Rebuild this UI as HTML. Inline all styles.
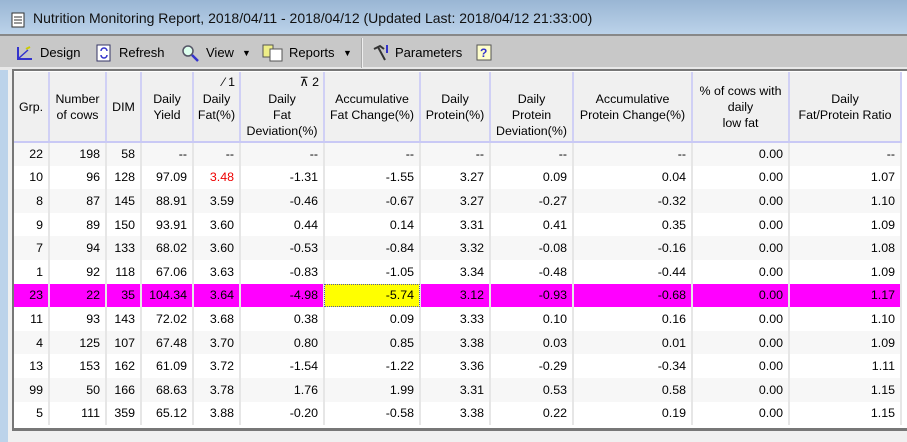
<!DOCTYPE html>
<html><head><style>
*{margin:0;padding:0;box-sizing:border-box}
body{width:907px;height:442px;overflow:hidden;position:relative;background:#f0f0f0;font-family:"Liberation Sans",sans-serif;font-size:12px;color:#000}
#title{position:absolute;left:0;top:0;width:907px;height:35px;background:linear-gradient(#99b6d4,#bcd3ea)}
#title span{position:absolute;left:33px;top:10px;font-size:14px;color:#111}
#tb{position:absolute;left:0;top:34px;width:907px;height:36px;background:#c8c8c8;border-top:2px solid #888;border-bottom:3px solid #e8e8e8}
#frame{position:absolute;left:0;top:35px;width:8px;height:407px;background:#bcd3ea}
.ti{position:absolute;top:9px;font-size:13px}
#grid{position:absolute;left:12px;top:69px;width:895px;height:360px;background:#fff;border-left:2px solid #777;border-top:2px solid #777}
table{border-collapse:collapse;table-layout:fixed;position:absolute;left:0;top:1px;font-size:12.4px}
th{background:#f0f0f0;font-weight:normal;height:70px;border-right:2px solid #d0d0f5;border-bottom:2px solid #c9c9f5;vertical-align:middle;line-height:16px;position:relative;padding:0 1px;white-space:nowrap}
td{height:23.6px;text-align:right;padding:0 5px;border-right:2px solid #e6e6e6;white-space:nowrap}
tr:nth-child(even) td{background:#f7f7f7}
tr.hl td{background:#ff00ff}
td.y{background:#ffff00!important;outline:1px dotted #55a;outline-offset:-1px}
.s{position:absolute;right:4px;top:2px}
#bot{position:absolute;left:12px;top:428px;width:895px;height:14px;background:#f0f0f0;border-top:3px solid #777}
</style></head><body>
<div id="title"><svg style="position:absolute;left:11px;top:12px" width="15" height="16"><rect x="1" y="1" width="12" height="14" fill="#fff" stroke="#333"/><path d="M3 5h8M3 8h8M3 11h8" stroke="#333"/></svg><span>Nutrition Monitoring Report, 2018/04/11 - 2018/04/12 (Updated Last: 2018/04/12 21:33:00)</span></div>
<div id="frame"></div>
<div id="tb">
<svg style="position:absolute;left:16px;top:9px" width="18" height="16"><path d="M2 2v12h14" stroke="#33c" fill="none" stroke-width="2"/><path d="M3 13L12 5" stroke="#33c" stroke-width="1.5"/><path d="M10 4l4-2" stroke="#cc0" stroke-width="2"/></svg><span class="ti" style="left:40px">Design</span>
<svg style="position:absolute;left:96px;top:8px" width="16" height="18"><rect x="1" y="1" width="13" height="16" fill="#fff" stroke="#336"/><path d="M5 7a3 3 0 0 1 6 0M11 11a3 3 0 0 1-6 0" stroke="#33c" fill="none" stroke-width="1.5"/></svg><span class="ti" style="left:119px">Refresh</span>
<svg style="position:absolute;left:181px;top:8px" width="18" height="18"><circle cx="7" cy="7" r="5" fill="#dfe" stroke="#556" stroke-width="1.5"/><path d="M11 11l6 6" stroke="#33c" stroke-width="2.5"/></svg><span class="ti" style="left:206px">View</span><span class="ti" style="left:242px;font-size:9px;top:12px">▼</span>
<svg style="position:absolute;left:262px;top:8px" width="22" height="18"><rect x="1" y="1" width="10" height="12" fill="#ee8" stroke="#555"/><rect x="8" y="5" width="12" height="12" fill="#fff" stroke="#555"/></svg><span class="ti" style="left:289px">Reports</span><span class="ti" style="left:343px;font-size:9px;top:12px">▼</span>
<div style="position:absolute;left:361px;top:2px;width:2px;height:30px;background:#aaa;border-right:1px solid #eee"></div>
<svg style="position:absolute;left:371px;top:7px" width="20" height="20"><path d="M3 6l6-3 4 3M7 4l7 13" stroke="#333" stroke-width="2" fill="none"/><path d="M16 2v8" stroke="#33c" stroke-width="2"/></svg><span class="ti" style="left:395px">Parameters</span>
<svg style="position:absolute;left:476px;top:8px" width="17" height="18"><rect x="1" y="1" width="14" height="15" fill="#ffc" stroke="#555"/><text x="4" y="13" font-size="12" font-family="Liberation Sans" fill="#33c" font-weight="bold">?</text></svg>
</div>
<div id="grid">
<table>
<colgroup><col style="width:35px"><col style="width:57px"><col style="width:35px"><col style="width:52px"><col style="width:47px"><col style="width:84px"><col style="width:96px"><col style="width:70px"><col style="width:83px"><col style="width:119px"><col style="width:97px"><col style="width:112px"></colgroup>
<tr><th>Grp.</th><th>Number<br>of cows</th><th>DIM</th><th>Daily<br>Yield</th><th><span class="s">⁄ 1</span>Daily<br>Fat(%)</th><th><span class="s">⊼ 2</span><br>Daily<br>Fat<br>Deviation(%)</th><th>Accumulative<br>Fat Change(%)</th><th>Daily<br>Protein(%)</th><th><br>Daily<br>Protein<br>Deviation(%)</th><th>Accumulative<br>Protein Change(%)</th><th>% of cows with<br>daily<br>low fat</th><th>Daily<br>Fat/Protein Ratio</th></tr>
<tr><td>22</td><td>198</td><td>58</td><td>--</td><td>--</td><td>--</td><td>--</td><td>--</td><td>--</td><td>--</td><td>0.00</td><td>--</td></tr>
<tr><td>10</td><td>96</td><td>128</td><td>97.09</td><td style="color:#e00">3.48</td><td>-1.31</td><td>-1.55</td><td>3.27</td><td>0.09</td><td>0.04</td><td>0.00</td><td>1.07</td></tr>
<tr><td>8</td><td>87</td><td>145</td><td>88.91</td><td>3.59</td><td>-0.46</td><td>-0.67</td><td>3.27</td><td>-0.27</td><td>-0.32</td><td>0.00</td><td>1.10</td></tr>
<tr><td>9</td><td>89</td><td>150</td><td>93.91</td><td>3.60</td><td>0.44</td><td>0.14</td><td>3.31</td><td>0.41</td><td>0.35</td><td>0.00</td><td>1.09</td></tr>
<tr><td>7</td><td>94</td><td>133</td><td>68.02</td><td>3.60</td><td>-0.53</td><td>-0.84</td><td>3.32</td><td>-0.08</td><td>-0.16</td><td>0.00</td><td>1.08</td></tr>
<tr><td>1</td><td>92</td><td>118</td><td>67.06</td><td>3.63</td><td>-0.83</td><td>-1.05</td><td>3.34</td><td>-0.48</td><td>-0.44</td><td>0.00</td><td>1.09</td></tr>
<tr class="hl"><td>23</td><td>22</td><td>35</td><td>104.34</td><td>3.64</td><td>-4.98</td><td class="y">-5.74</td><td>3.12</td><td>-0.93</td><td>-0.68</td><td>0.00</td><td>1.17</td></tr>
<tr><td>11</td><td>93</td><td>143</td><td>72.02</td><td>3.68</td><td>0.38</td><td>0.09</td><td>3.33</td><td>0.10</td><td>0.16</td><td>0.00</td><td>1.10</td></tr>
<tr><td>4</td><td>125</td><td>107</td><td>67.48</td><td>3.70</td><td>0.80</td><td>0.85</td><td>3.38</td><td>0.03</td><td>0.01</td><td>0.00</td><td>1.09</td></tr>
<tr><td>13</td><td>153</td><td>162</td><td>61.09</td><td>3.72</td><td>-1.54</td><td>-1.22</td><td>3.36</td><td>-0.29</td><td>-0.34</td><td>0.00</td><td>1.11</td></tr>
<tr><td>99</td><td>50</td><td>166</td><td>68.63</td><td>3.78</td><td>1.76</td><td>1.99</td><td>3.31</td><td>0.53</td><td>0.58</td><td>0.00</td><td>1.15</td></tr>
<tr><td>5</td><td>111</td><td>359</td><td>65.12</td><td>3.88</td><td>-0.20</td><td>-0.58</td><td>3.38</td><td>0.22</td><td>0.19</td><td>0.00</td><td>1.15</td></tr>
</table>
</div>
<div id="bot"></div>
</body></html>
